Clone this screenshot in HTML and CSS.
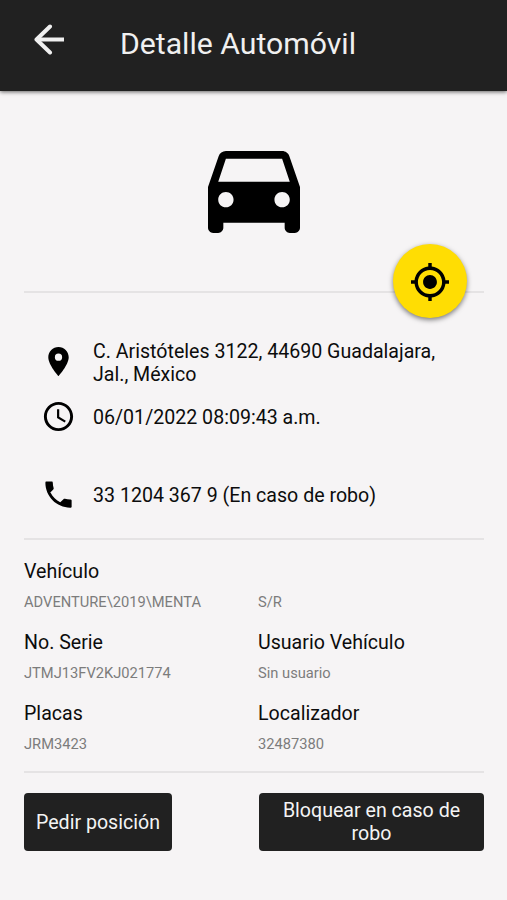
FILE: index.html
```html
<!DOCTYPE html>
<html lang="es">
<head>
  <meta charset="UTF-8">
  <meta name="viewport" content="width=device-width, initial-scale=1.0">
  <title>Detalle Automóvil</title>
  <link rel="stylesheet" href="styles.css">
</head>
<body>
  <header class="toolbar">
    <button class="back-button" aria-label="Regresar">
      <svg viewBox="0 0 31 31" fill="none" stroke="currentColor" stroke-width="4" stroke-linecap="round" stroke-linejoin="round"><path d="M16 2.5L2.5 15.5 16 28.5"/><path d="M2.5 15.5H30" stroke-linecap="butt"/></svg>
    </button>
    <h1>Detalle Automóvil</h1>
  </header>

  <main class="content">
    <section class="hero">
      <svg class="car-icon" viewBox="3 5 18 16"><path d="M18.92 6.01C18.72 5.42 18.16 5 17.5 5h-11c-.66 0-1.21.42-1.42 1.01L3 12v8c0 .55.45 1 1 1h1c.55 0 1-.45 1-1v-1h12v1c0 .55.45 1 1 1h1c.55 0 1-.45 1-1v-8l-2.08-5.99zM6.5 16c-.83 0-1.5-.67-1.5-1.5S5.67 13 6.5 13s1.5.67 1.5 1.5S7.33 16 6.5 16zm11 0c-.83 0-1.5-.67-1.5-1.5s.67-1.5 1.5-1.5 1.5.67 1.5 1.5-.67 1.5-1.5 1.5zM5 11l1.5-4.5h11L19 11H5z"/></svg>
      <button class="locate-button" aria-label="Ubicar">
        <svg viewBox="1 1 22 22"><path d="M12 8c-2.21 0-4 1.79-4 4s1.79 4 4 4 4-1.79 4-4-1.79-4-4-4zm8.94 3A8.994 8.994 0 0 0 13 3.06V1h-2v2.06A8.994 8.994 0 0 0 3.06 11H1v2h2.06A8.994 8.994 0 0 0 11 20.94V23h2v-2.06A8.994 8.994 0 0 0 20.94 13H23v-2h-2.06zM12 19c-3.87 0-7-3.13-7-7s3.13-7 7-7 7 3.13 7 7-3.13 7-7 7z"/></svg>
      </button>
    </section>

    <ul class="info-list">
      <li class="info-item address">
        <svg viewBox="0 0 24 24"><path d="M12 2C8.13 2 5 5.13 5 9c0 5.25 7 13 7 13s7-7.75 7-13c0-3.87-3.13-7-7-7zm0 9.5a2.5 2.5 0 0 1 0-5 2.5 2.5 0 0 1 0 5z"/></svg>
        <span>C. Aristóteles 3122, 44690 Guadalajara, Jal., México</span>
      </li>
      <li class="info-item date">
        <svg viewBox="0 0 24 24"><path d="M11.99 2C6.47 2 2 6.48 2 12s4.47 10 9.99 10C17.52 22 22 17.52 22 12S17.52 2 11.99 2zM12 20c-4.42 0-8-3.58-8-8s3.58-8 8-8 8 3.58 8 8-3.58 8-8 8zm.5-13H11v6l5.25 3.15.75-1.23-4.5-2.67z"/></svg>
        <span>06/01/2022 08:09:43 a.m.</span>
      </li>
      <li class="info-item phone">
        <svg viewBox="0 0 24 24"><path d="M6.62 10.79c1.44 2.83 3.76 5.14 6.59 6.59l2.2-2.2c.27-.27.67-.36 1.02-.24 1.12.37 2.33.57 3.57.57.55 0 1 .2 1 .6V20.5c0 .3-.45.5-1 .5-9.39 0-17-7.61-17-17 0-.55.2-1 .5-1h4c.4 0 .6.45.6 1 0 1.25.2 2.45.57 3.57.11.35.03.74-.25 1.02l-2.2 2.2z"/></svg>
        <span>33 1204 367 9 (En caso de robo)</span>
      </li>
    </ul>

    <dl class="details">
      <div class="detail">
        <dt>Vehículo</dt>
        <dd>ADVENTURE\2019\MENTA</dd>
      </div>
      <div class="detail">
        <dt></dt>
        <dd>S/R</dd>
      </div>
      <div class="detail">
        <dt>No. Serie</dt>
        <dd>JTMJ13FV2KJ021774</dd>
      </div>
      <div class="detail">
        <dt>Usuario Vehículo</dt>
        <dd>Sin usuario</dd>
      </div>
      <div class="detail">
        <dt>Placas</dt>
        <dd>JRM3423</dd>
      </div>
      <div class="detail">
        <dt>Localizador</dt>
        <dd>32487380</dd>
      </div>
    </dl>

    <div class="actions">
      <button class="action-button">Pedir posición</button>
      <button class="action-button block">Bloquear en caso de robo</button>
    </div>
  </main>
</body>
</html>
```

FILE: styles.css
```css
/* Base styles */
* {
  box-sizing: border-box;
}

body {
  margin: 0;
  min-height: 900px;
  background-color: #f6f4f5;
  color: #0c0c0c;
  font-family: Roboto, sans-serif;
}

button {
  padding: 0;
  border: none;
  font-family: inherit;
  cursor: pointer;
}

svg {
  display: block;
}

/* Toolbar */
.toolbar {
  display: flex;
  height: 91px;
  padding-left: 34px;
  background-color: #212121;
  color: #f0f0f0;
  box-shadow: 0 1px 4px rgba(0, 0, 0, 0.6);
}

.back-button {
  width: 31px;
  height: 31px;
  margin-top: 24px;
  background: none;
  color: inherit;
}

.toolbar h1 {
  margin: 26px 0 0 55px;
  font-size: 30.2px;
  font-weight: 400;
  line-height: 36px;
}

.content {
  padding: 0 23px 0 24px;
}

/* Car and locate button */
.hero {
  position: relative;
  height: 202px;
  padding-top: 59.5px;
  border-bottom: 2px solid #e5e3e4;
}

.car-icon {
  width: 92px;
  height: 82px;
  margin: 0 auto;
  color: #000;
}

.locate-button {
  position: absolute;
  right: 17px;
  bottom: -27px;
  display: flex;
  align-items: center;
  justify-content: center;
  width: 74px;
  height: 74px;
  border-radius: 50%;
  background-color: #ffdd03;
  color: #111;
  box-shadow: 0 2px 5px rgba(0, 0, 0, 0.5);
}

.locate-button svg {
  width: 38px;
  height: 38px;
  margin-top: 1px;
}

/* Address, date and phone */
.info-list {
  height: 247px;
  margin: 0;
  padding: 47px 40px 0 17px;
  border-bottom: 2px solid #e5e3e4;
  list-style: none;
}

.info-item {
  display: flex;
  align-items: center;
  gap: 17px;
  font-size: 19.6px;
  line-height: 23px;
}

.info-item svg {
  flex: none;
  width: 35px;
  height: 35px;
  margin-top: -2px;
  fill: #000;
}

.info-item.address svg {
  margin-top: -3px;
}

.date {
  margin-top: 15px;
}

.phone {
  margin-top: 45px;
}

/* Vehicle details */
.details {
  display: grid;
  grid-template-columns: 234px 1fr;
  grid-auto-rows: 71px;
  height: 233px;
  margin: 0;
  padding-top: 19px;
  border-bottom: 2px solid #e5e3e4;
}

.detail dt {
  height: 26px;
  font-size: 19.6px;
  line-height: 26px;
}

.detail dd {
  margin: 7px 0 0;
  color: #7c7c7c;
  font-size: 14.7px;
  line-height: 20px;
}

/* Actions */
.actions {
  display: flex;
  justify-content: space-between;
  margin-top: 20px;
}

.action-button {
  width: 148px;
  height: 58px;
  border-radius: 4px;
  background-color: #212121;
  color: #f4f4f4;
  font-size: 19.6px;
  line-height: 23px;
}

.action-button.block {
  width: 225px;
  padding: 0 16px;
}
```
